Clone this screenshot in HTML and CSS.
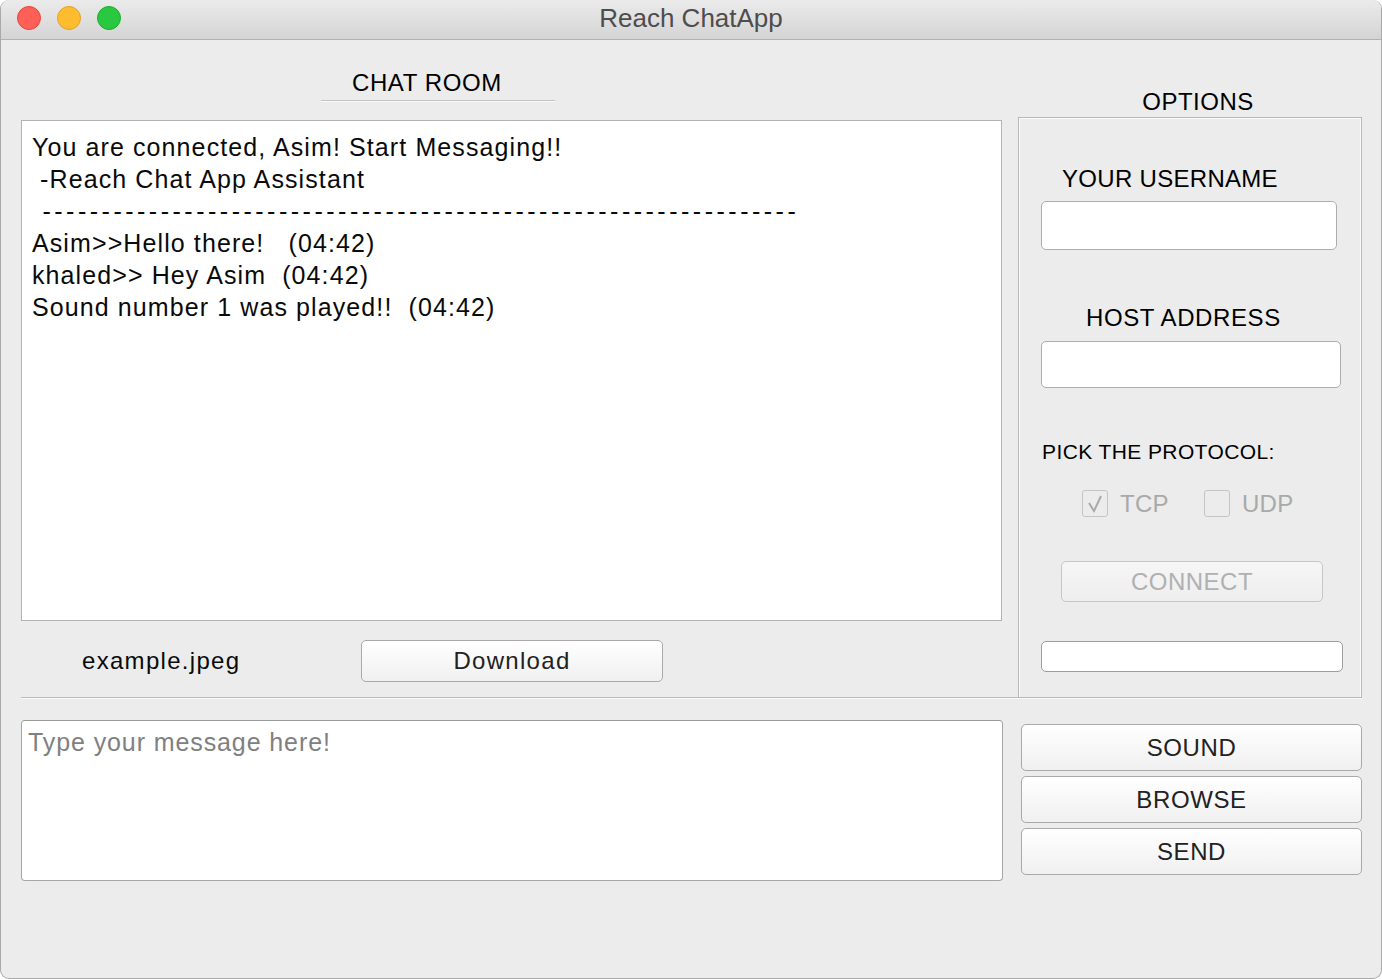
FILE: index.html
```html
<!DOCTYPE html>
<html lang="en">
<head>
<meta charset="utf-8">
<title>Reach ChatApp</title>
<link rel="stylesheet" href="styles.css">
</head>
<body>
<div class="window">
  <div class="titlebar">
    <div class="lights">
      <span class="light red"></span>
      <span class="light yellow"></span>
      <span class="light green"></span>
    </div>
    <div class="title">Reach ChatApp</div>
  </div>
  <div class="content">
    <div class="top">
      <div class="chat-col">
        <div class="chat-heading">CHAT ROOM</div>
        <div class="chat-box"><div class="line">You are connected, Asim! Start Messaging!!</div><div class="line"> -Reach Chat App Assistant</div><div class="line dashes"> ----------------------------------------------------------------</div><div class="line">Asim&gt;&gt;Hello there!   (04:42)</div><div class="line">khaled&gt;&gt; Hey Asim  (04:42)</div><div class="line">Sound number 1 was played!!  (04:42)</div></div>
        <div class="file-row">
          <span class="file-name">example.jpeg</span>
          <button class="btn download-btn">Download</button>
        </div>
      </div>
      <div class="options-col">
        <div class="options-heading">OPTIONS</div>
        <div class="options-frame">
          <div class="opt-label username-label">YOUR USERNAME</div>
          <input class="field username-field" type="text">
          <div class="opt-label host-label">HOST ADDRESS</div>
          <input class="field host-field" type="text">
          <div class="protocol-label">PICK THE PROTOCOL:</div>
          <div class="protocols">
            <span class="check checked"><svg width="20" height="20" viewBox="0 0 20 20"><polyline points="4,9 9,17 16,2" fill="none" stroke="#a9a9a9" stroke-width="2"/></svg></span>
            <span class="check-text">TCP</span>
            <span class="check udp-check"></span>
            <span class="check-text">UDP</span>
          </div>
          <button class="btn connect-btn" disabled>CONNECT</button>
          <input class="field status-field" type="text">
        </div>
      </div>
    </div>
    <div class="bottom">
      <textarea class="message" placeholder="Type your message here!"></textarea>
      <div class="actions">
        <button class="btn action-btn">SOUND</button>
        <button class="btn action-btn">BROWSE</button>
        <button class="btn action-btn">SEND</button>
      </div>
    </div>
  </div>
</div>
</body>
</html>
```
FILE: styles.css
```css
* { box-sizing: border-box; }
html, body {
  margin: 0;
  padding: 0;
  background: #ffffff;
}
body {
  font-family: "Liberation Sans", Arial, sans-serif;
  color: #000;
}
.window {
  width: 1382px;
  height: 979px;
  background: #ececec;
  border-left: 1px solid #a9a9a9;
  border-right: 1px solid #a9a9a9;
  border-bottom: 1px solid #a9a9a9;
  border-radius: 9px 9px 9px 9px;
  overflow: hidden;
  display: flex;
  flex-direction: column;
}
.titlebar {
  height: 40px;
  flex: none;
  border-bottom: 1px solid #b2b2b2;
  background: linear-gradient(#ebebeb, #d4d4d4);
  display: flex;
  align-items: center;
  position: relative;
}
.lights {
  display: flex;
  gap: 16px;
  padding-left: 16px;
  margin-top: -3px;
}
.light {
  width: 24px;
  height: 24px;
  border-radius: 50%;
  display: block;
}
.red { background: #fe5f57; border: 1px solid #e2463f; }
.yellow { background: #febc2e; border: 1px solid #e0a126; }
.green { background: #28c840; border: 1px solid #1cac2c; }
.title {
  position: absolute;
  left: 0;
  right: 0;
  top: 3px;
  text-align: center;
  font-size: 26px;
  line-height: 30px;
  color: #4d4d4d;
}
.content {
  flex: 1;
  padding: 0 19px 0 20px;
  display: flex;
  flex-direction: column;
}
.top {
  display: flex;
}
.chat-col {
  width: 997px;
  display: flex;
  flex-direction: column;
  border-bottom: 1px solid #bcbcbc;
  box-shadow: 0 1px 0 #fafafa;
}
.chat-heading {
  margin: 28px 0 0 300px;
  width: 234px;
  padding-left: 31px;
  padding-bottom: 2px;
  font-size: 24px;
  line-height: 30px;
  letter-spacing: 0.6px;
  border-bottom: 1px solid #c2c2c2;
  box-shadow: 0 1px 0 #fafafa;
}
.chat-box {
  margin-top: 19px;
  width: 981px;
  height: 501px;
  background: #fff;
  border: 1px solid #b3b3b3;
  padding: 10px 10px;
  font-size: 25px;
  line-height: 32px;
  letter-spacing: 1.1px;
  color: #0a0a0a;
}
.line {
  white-space: pre;
}
.dashes {
  letter-spacing: 3.5px;
}
.file-row {
  display: flex;
  align-items: center;
  padding: 19px 0 15px 61px;
  height: 76px;
}
.file-name {
  width: 279px;
  font-size: 24px;
  letter-spacing: 1.3px;
  color: #0a0a0a;
}
.btn {
  font-family: "Liberation Sans", Arial, sans-serif;
  font-size: 24px;
  color: #222;
  background: linear-gradient(#ffffff, #f0f0f0);
  border: 1px solid #a9a9a9;
  border-radius: 5px;
  padding: 0;
  margin: 0;
}
.download-btn {
  width: 302px;
  height: 42px;
  letter-spacing: 1.3px;
}
.options-col {
  width: 344px;
  display: flex;
  flex-direction: column;
}
.options-heading {
  margin-top: 47px;
  font-size: 24px;
  line-height: 30px;
  letter-spacing: 0.5px;
  text-align: center;
  padding-left: 16px;
}
.options-frame {
  flex: 1;
  border: 1px solid #b8b8b8;
  box-shadow: inset 1px 1px 0 #fafafa, inset -1px 0 0 #fafafa, 0 1px 0 #fafafa;
  display: flex;
  flex-direction: column;
  align-items: flex-start;
}
.opt-label {
  font-size: 24px;
  line-height: 30px;
  letter-spacing: 0.3px;
}
.username-label {
  margin-top: 46px;
  padding-left: 43px;
}
.host-label {
  margin-top: 53px;
  padding-left: 67px;
  letter-spacing: 0.6px;
}
.field {
  display: block;
  background: #fff;
  border: 1px solid #adadad;
  border-radius: 5px;
  margin-left: 22px;
  padding: 0;
  outline: none;
}
.username-field {
  margin-top: 7px;
  width: 296px;
  height: 49px;
}
.host-field {
  margin-top: 8px;
  width: 300px;
  height: 47px;
}
.protocol-label {
  margin-top: 51px;
  padding-left: 23px;
  font-size: 21px;
  line-height: 26px;
  letter-spacing: 0.4px;
}
.protocols {
  margin-top: 25px;
  margin-left: 63px;
  height: 27px;
  display: flex;
  align-items: center;
}
.check {
  width: 26px;
  height: 27px;
  border: 1px solid #c4c4c4;
  border-radius: 3px;
  background: #ececec;
  display: flex;
  align-items: center;
  justify-content: center;
}
.check-text {
  font-size: 24px;
  color: #a9a9a9;
  margin-left: 12px;
  letter-spacing: 0.3px;
}
.udp-check {
  margin-left: 35px;
}
.connect-btn {
  margin-top: 44px;
  margin-left: 42px;
  width: 262px;
  height: 41px;
  color: #b0b0b0;
  border-color: #c6c6c6;
  background: linear-gradient(#f6f6f6, #eeeeee);
  letter-spacing: 0.5px;
}
.status-field {
  margin-top: 39px;
  width: 302px;
  height: 31px;
  border-color: #9d9d9d;
}
.bottom {
  display: flex;
  align-items: flex-start;
}
.message {
  margin-top: 22px;
  width: 982px;
  height: 161px;
  background: #fff;
  border: 1px solid #a6a6a6;
  border-top-color: #9a9a9a;
  border-radius: 4px;
  padding: 5px 6px;
  font-family: "Liberation Sans", Arial, sans-serif;
  font-size: 25px;
  line-height: 32px;
  letter-spacing: 0.9px;
  resize: none;
  outline: none;
}
.message::placeholder {
  color: #808080;
}
.actions {
  margin-top: 26px;
  margin-left: 18px;
  width: 341px;
  display: flex;
  flex-direction: column;
  gap: 5px;
}
.action-btn {
  height: 47px;
  width: 341px;
  letter-spacing: 0.6px;
}
```
